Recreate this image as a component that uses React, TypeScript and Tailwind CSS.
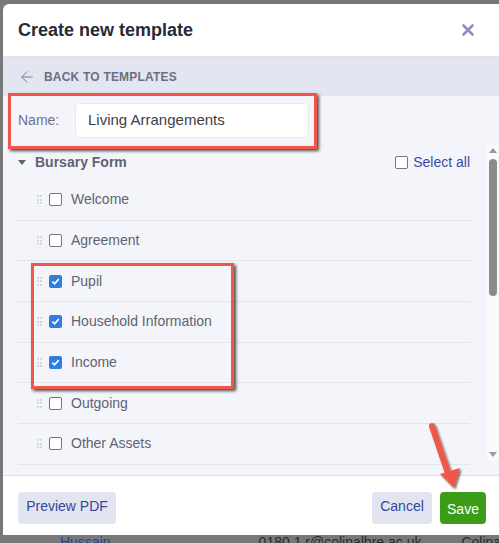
import { ArrowLeft, X } from "lucide-react";

const items = [
  { label: "Welcome", checked: false },
  { label: "Agreement", checked: false },
  { label: "Pupil", checked: true },
  { label: "Household Information", checked: true },
  { label: "Income", checked: true },
  { label: "Outgoing", checked: false },
  { label: "Other Assets", checked: false },
];

const DragHandle = () => (
  <div className="grid grid-cols-2 gap-[1.5px] w-[5px] mr-[7px]">
    {[0, 1, 2, 3, 4, 5].map((i) => (
      <span key={i} className="w-[2px] h-[2px] bg-[#c9ccd6] rounded-full" />
    ))}
  </div>
);

const Check = ({ checked }: { checked: boolean }) =>
  checked ? (
    <span className="w-[13px] h-[13px] rounded-[2px] bg-[#2f7fe0] flex items-center justify-center">
      <svg width="9" height="9" viewBox="0 0 10 10">
        <path d="M1.5 5.2 L4 7.6 L8.6 2.4" stroke="white" strokeWidth="1.8" fill="none" />
      </svg>
    </span>
  ) : (
    <span className="w-[13px] h-[13px] rounded-[2px] border border-[#767676] bg-white" />
  );

export default function App() {
  return (
    <div
      className="relative w-[499px] h-[543px] overflow-hidden bg-[#787878]"
      style={{ fontFamily: '"Liberation Sans", Arial, sans-serif' }}
    >
      {/* page behind the overlay */}
      <div className="absolute left-0 right-0 top-[535px] h-[8px] flex whitespace-nowrap text-[14px] text-[#2a2a2a] leading-none">
        <span className="ml-[60px] text-[#2b3f8f]">Hussain</span>
        <span className="ml-[148px]">0180 1 r@colinalbre.ac.uk</span>
        <span className="ml-[40px]">Colinal</span>
      </div>

      {/* modal */}
      <div className="absolute left-[3px] top-[4px] w-[520px] h-[531px] bg-white rounded-tl-[6px] flex flex-col overflow-hidden">
        <div className="h-[52px] flex items-center justify-between pl-[15px] pr-[46px] shrink-0">
          <h1 className="text-[18px] font-bold text-[#262a36]">Create new template</h1>
          <X className="w-[18px] h-[18px] text-[#8a8fbf]" strokeWidth={3.5} />
        </div>

        <div className="h-[40px] bg-[#e3e6f0] flex items-center pl-[15px] gap-[8px] shrink-0 border-t border-[#dde0ea]">
          <ArrowLeft className="w-[18px] h-[18px] text-[#767a8c]" strokeWidth={1.3} />
          <span className="text-[12px] font-bold text-[#6b6f80] tracking-[0.2px]">BACK TO TEMPLATES</span>
        </div>

        <div className="h-[379px] bg-[#f4f5fa] flex flex-col shrink-0">
          <div className="flex items-center pl-[15px] h-[49px] shrink-0">
            <span className="text-[14px] text-[#6c7190] w-[57px]">Name:</span>
            <div className="w-[234px] h-[35px] bg-white rounded-[4px] border border-[#e6e8ef] flex items-center pl-[12px] text-[15px] text-[#3d404a]">
              Living Arrangements
            </div>
          </div>

          <div className="flex flex-1 min-h-0">
            <div className="w-[467px] pl-[15px] flex flex-col">
              <div className="h-[35px] flex items-center justify-between shrink-0">
                <div className="flex items-center gap-[9px]">
                  <svg width="8" height="6" viewBox="0 0 8 6">
                    <path d="M0 0 H8 L4 5 Z" fill="#5f6373" />
                  </svg>
                  <span className="text-[14px] font-bold text-[#5f6373]">Bursary Form</span>
                </div>
                <div className="flex items-center gap-[5px]">
                  <Check checked={false} />
                  <span className="text-[14px] text-[#3d4aa0]">Select all</span>
                </div>
              </div>
              <div className="flex flex-col">
                {items.map((item) => (
                  <div
                    key={item.label}
                    className="h-[40.7px] border-b border-[#e3e5ec] flex items-center pl-[19px] shrink-0"
                  >
                    <DragHandle />
                    <Check checked={item.checked} />
                    <span className="ml-[9px] text-[14px] text-[#5f6373]">{item.label}</span>
                  </div>
                ))}
              </div>
            </div>

            {/* scrollbar */}
            <div className="ml-[17px] w-[12px] h-[316px] bg-[#fafafa] flex flex-col items-center pt-[3px]">
              <svg width="8" height="5" viewBox="0 0 8 5">
                <path d="M0 5 L4 0 L8 5 Z" fill="#9a9a9a" />
              </svg>
              <div className="mt-[6px] w-[8px] h-[137px] rounded-[4px] bg-[#8c8c8c]" />
              <div className="flex-1" />
              <svg width="8" height="5" viewBox="0 0 8 5" className="mb-[4px]">
                <path d="M0 0 L8 0 L4 5 Z" fill="#9a9a9a" />
              </svg>
            </div>
          </div>
        </div>

        <div className="border-t border-[#dfe2ea] flex items-start pt-[16px] pl-[15px] pr-[37px] flex-1">
          <button className="h-[32px] w-[98px] rounded-[4px] bg-[#e2e5ef] text-[14px] text-[#34469a] pb-[4px]">
            Preview PDF
          </button>
          <div className="flex-1" />
          <button className="h-[32px] w-[60px] rounded-[4px] bg-[#e2e5ef] text-[14px] text-[#34469a] pb-[4px]">
            Cancel
          </button>
          <button className="ml-[8px] h-[32px] w-[46px] rounded-[4px] bg-[#3c9c18] text-[14px] text-white pt-[2px]">
            Save
          </button>
        </div>
      </div>

      {/* annotations */}
      <div className="absolute left-[8px] top-[93px] w-[309px] h-[56px] border-[3px] border-[#f0564a] shadow-[2px_2px_3px_rgba(0,0,0,0.7)]" />
      <div className="absolute left-[31px] top-[263px] w-[203px] h-[126px] border-[3px] border-[#f0564a] shadow-[2px_2px_3px_rgba(0,0,0,0.7)]" />
      <svg className="absolute left-[420px] top-[418px]" width="50" height="80" viewBox="0 0 50 80">
        <defs>
          <filter id="sh" x="-50%" y="-50%" width="200%" height="200%">
            <feDropShadow dx="1.5" dy="1.5" stdDeviation="1.2" floodColor="#000" floodOpacity="0.6" />
          </filter>
        </defs>
        <g filter="url(#sh)">
          <path d="M12 8 L29 58" stroke="#f0564a" strokeWidth="6" strokeLinecap="round" />
          <path d="M20 56 L34 70 L40 50 Z" fill="#f0564a" />
        </g>
      </svg>
    </div>
  );
}
